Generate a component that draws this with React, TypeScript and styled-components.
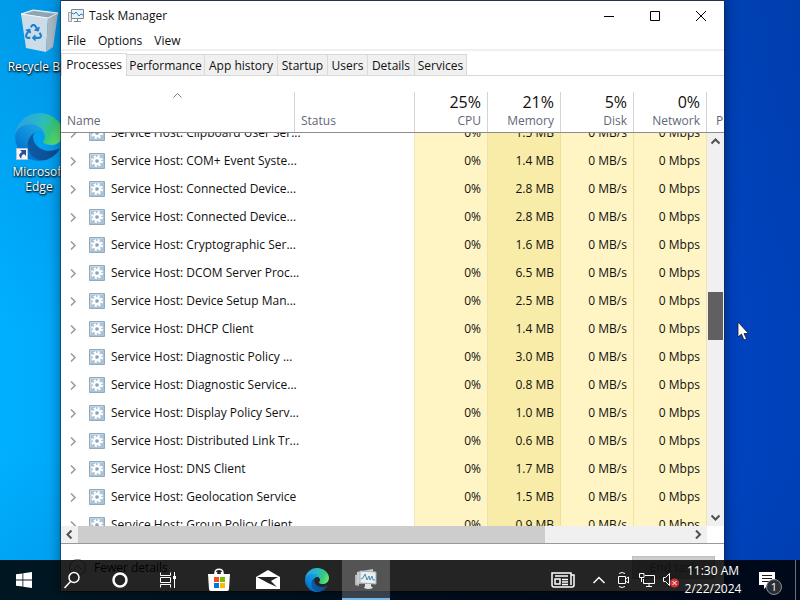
import React from 'react';
import styled, { createGlobalStyle } from 'styled-components';
import { FaRecycle } from 'react-icons/fa';

const GlobalStyle = createGlobalStyle`
  * { box-sizing: border-box; }
  html, body { margin: 0; height: 100%; overflow: hidden; }
  body, button, table { font-family: 'Open Sans', 'Noto Sans', sans-serif; font-size: 12px; line-height: 16px; }
  button { margin: 0; padding: 0; border: 0; background: none; color: inherit; }
  svg { display: block; flex: none; }
`;

const Desktop = styled.main`
  position: relative;
  height: 100vh;
  overflow: hidden;
  background: linear-gradient(180deg, rgba(0, 50, 120, 0.16), rgba(0, 0, 0, 0) 55%, rgba(0, 0, 0, 0) 75%, rgba(0, 40, 100, 0.1)),
    linear-gradient(90deg, #00b0ff 0, #00a8fa 8%, #0a6ad8 50%, #0044c0 90%, #0040b8 100%);
`;

const Shortcuts = styled.div`
  display: flex;
  flex-direction: column;
  gap: 39px;
  width: 78px;
  padding-top: 8px;
`;

const Shortcut = styled.button`
  position: relative;
  display: flex;
  flex-direction: column;
  align-items: center;
  gap: 3px;
  color: #fff;
  line-height: 15px;
  text-shadow: 0 1px 2px #000, 1px 1px 2px rgba(0, 0, 0, 0.8);
`;

const ShortcutBadge = styled.span`
  position: absolute;
  left: 16px;
  top: 35px;
`;

const Window = styled.section`
  position: absolute;
  left: 60px;
  right: 75px;
  top: 0;
  bottom: 8px;
  display: flex;
  flex-direction: column;
  background: #fff;
  background-clip: padding-box;
  border: 1px solid rgba(20, 40, 80, 0.55);
  border-top-color: #26304f;
  box-shadow: 0 0 12px rgba(0, 0, 0, 0.4);
  color: #101010;
`;

const TitleBar = styled.header`
  display: flex;
  align-items: center;
  height: 30px;
  padding-left: 7px;
`;

const Title = styled.h1`
  flex: 1;
  margin: 0 0 0 5px;
  font-size: 12px;
  font-weight: 400;
`;

const CaptionButton = styled.button`
  display: grid;
  place-items: center;
  width: 46px;
  height: 30px;
`;

const MenuBar = styled.nav`
  display: flex;
  height: 20px;
  border-bottom: 2px solid #f0f0f0;
`;

const MenuItem = styled.button`
  padding: 2px 6px 0;
`;

const TabStrip = styled.div`
  display: flex;
  align-items: flex-end;
  height: 25px;
  border-bottom: 1px solid #d9d9d9;
`;

const Tab = styled.button<{ $width: number; $active?: boolean }>`
  width: ${p => p.$width}px;
  height: ${p => (p.$active ? 23 : 21)}px;
  margin-bottom: ${p => (p.$active ? -1 : 0)}px;
  padding-top: ${p => (p.$active ? 0 : 2)}px;
  background: ${p => (p.$active ? '#fff' : '#f0f0f0')};
  border: 1px solid #d9d9d9;
  border-left-width: ${p => (p.$active ? 1 : 0)}px;
  border-bottom-width: 0;
  white-space: nowrap;
`;

const ListPane = styled.div`
  flex: 1;
  min-height: 0;
  display: grid;
  grid-template-columns: minmax(0, 1fr) 17px;
  grid-template-rows: 57px minmax(0, 1fr) 17px;
  border-bottom: 1px solid #999;
`;

const ProcessTable = styled.table`
  display: contents;
`;

const Head = styled.thead`
  display: block;
  grid-column: 1 / -1;
  padding-top: 16px;
  border-bottom: 1px solid #8c8c8c;
`;

const Body = styled.tbody`
  display: block;
  overflow: hidden;
  min-height: 0;
`;

const Row = styled.tr`
  display: grid;
  grid-template-columns: 234px 120px repeat(4, 73px) minmax(0, 1fr);

  ${Body} &:first-child { margin-top: -14px; }
`;

const HeadCell = styled.th<{ $numeric?: boolean; $last?: boolean }>`
  display: flex;
  flex-direction: column;
  justify-content: flex-end;
  height: 40px;
  overflow: hidden;
  padding: 0 ${p => (p.$last ? 0 : 6)}px 3px ${p => (p.$last ? 9 : 6)}px;
  border-right: ${p => (p.$last ? 0 : 1)}px solid #d4d4d8;
  text-align: ${p => (p.$numeric ? 'right' : 'left')};
  color: #5f6878;
  font-weight: 400;
`;

const Usage = styled.span`
  margin-bottom: 1px;
  font-size: 16px;
  line-height: 20px;
  color: #101010;
`;

const SortMark = styled.span`
  align-self: center;
  margin-bottom: 13px;
`;

const NameCell = styled.td`
  display: flex;
  align-items: center;
  height: 28px;
  padding: 0 0 0 8px;
  white-space: nowrap;
`;

const ExpandButton = styled.button`
  flex: none;
  width: 20px;
  height: 9px;
`;

const ProcessName = styled.span`
  flex: none;
  margin-left: 6px;
`;

const ValueCell = styled.td<{ $warm?: boolean }>`
  height: 28px;
  padding: 6px 6px;
  text-align: right;
  white-space: nowrap;
  background: ${p => (p.$warm ? '#f9eca8' : '#fff4c4')};
  border-right: 1px solid ${p => (p.$warm ? '#eddf9c' : '#efe2ac')};
`;

const StatusCell = styled.td`
  height: 28px;
  padding: 0;
  border-right: 1px solid #eee6c0;
`;

const VScroll = styled.div`
  display: flex;
  flex-direction: column;
  background: #f0f0f0;
`;

const HScroll = styled.div`
  display: flex;
  background: #f0f0f0;
`;

const ScrollButton = styled.button`
  display: grid;
  place-items: center;
  width: 17px;
  height: 17px;
`;

const Space = styled.div<{ $grow: number }>`
  flex: ${p => p.$grow} 1 0;
`;

const VThumb = styled.div`
  height: 48px;
  margin: 0 1px;
  background: #606060;
`;

const HThumb = styled.div`
  flex: 467 1 0;
  background: #cdcdcd;
`;

const Footer = styled.footer`
  display: flex;
  align-items: center;
  justify-content: space-between;
  height: 47px;
  padding: 0 9px 0 8px;
`;

const FewerDetails = styled.button`
  display: flex;
  align-items: center;
  gap: 8px;
`;

const EndTask = styled.button`
  width: 83px;
  height: 23px;
  background: #ccc;
  border: 1px solid #bfbfbf;
  color: #838383;
`;

const Taskbar = styled.nav`
  position: absolute;
  left: 0;
  right: 0;
  bottom: 0;
  display: flex;
  height: 40px;
  background: rgba(0, 0, 0, 0.86);
  color: #fff;
`;

const TaskButton = styled.button<{ $active?: boolean }>`
  display: grid;
  place-items: center;
  width: 48px;
  height: 40px;
  background: ${p => (p.$active ? 'rgba(255, 255, 255, 0.22)' : 'none')};
  border-bottom: ${p => (p.$active ? '2px solid #76b9ed' : '0')};
`;

const Apps = styled.div`
  display: flex;
  flex: 1;
  gap: 1px;
  padding-left: 3px;
`;

const TrayButton = styled.button`
  display: grid;
  place-items: center;
  width: 24px;
  height: 40px;
`;

const Clock = styled.button`
  width: 60px;
  line-height: 18px;
  white-space: nowrap;
`;

const Notifications = styled(TaskButton)`
  position: relative;
`;

const Count = styled.span`
  position: absolute;
  left: 23px;
  top: 19px;
  width: 16px;
  height: 16px;
  border: 1px solid #8a8f94;
  border-radius: 50%;
  background: #2a2f35;
  font-size: 11px;
  line-height: 14px;
`;

const ShowDesktop = styled.button`
  width: 5px;
  margin-left: 4px;
  border-left: 1px solid #6a6f74;
`;

const Pointer = styled.div`
  position: absolute;
  left: 737px;
  top: 321px;
`;

type Direction = 'up' | 'down' | 'left' | 'right';

const chevrons: Record<Direction, string> = {
  up: 'M.5 6.500 4.500 2.500 8.500 6.500',
  down: 'M.5 2.500 4.500 6.500 8.500 2.500',
  left: 'M6.500.5 2.500 4.500 6.500 8.500',
  right: 'M2 .5 6 4.500 2 8.500',
};

const Chevron = ({ to, color = '#505050', weight = 2 }: { to: Direction; color?: string; weight?: number }) => (
  <svg width="9" height="9" viewBox="0 0 9 9" fill="none" stroke={color} strokeWidth={weight}>
    <path d={chevrons[to]} />
  </svg>
);

const EdgeLogo = ({ size, id }: { size: number; id: string }) => (
  <svg width={size} height={size} viewBox="0 0 256 256">
    <defs>
      <linearGradient id={`${id}a`} x1="0.2" x2="1" y1="0.5" y2="0.5">
        <stop offset="0" stopColor="#0c59a4" />
        <stop offset="1" stopColor="#114a8b" />
      </linearGradient>
      <linearGradient id={`${id}b`} x1="0.7" x2="0.2" y1="0.2" y2="0.95">
        <stop offset="0" stopColor="#1b9de2" />
        <stop offset="0.6" stopColor="#0680d7" />
        <stop offset="1" stopColor="#0067c4" />
      </linearGradient>
      <linearGradient id={`${id}c`} x1="0" x2="1" y1="0.3" y2="0.6">
        <stop offset="0" stopColor="#2b9fe0" />
        <stop offset="0.45" stopColor="#2bb8c8" />
        <stop offset="0.75" stopColor="#36c780" />
        <stop offset="1" stopColor="#66eb6e" />
      </linearGradient>
    </defs>
    <g transform="translate(-4.630 -4.920)">
      <path fill={`url(#${id}a)`} d="M235.680,195.460a93.730,93.730,0,0,1-10.540,4.710,101.870,101.870,0,0,1-35.900,6.460c-47.320,0-88.540-32.550-88.540-74.320A31.480,31.480,0,0,1,117.130,105c-42.800,1.800-53.800,46.400-53.800,72.530,0,73.880,68.090,81.370,82.760,81.370,7.910,0,19.840-2.300,27-4.560l1.310-.440A128.340,128.340,0,0,0,241,201.100a4,4,0,0,0-5.320-5.640Z" />
      <path fill={`url(#${id}b)`} d="M110.340,246.340A79.200,79.200,0,0,1,87.600,225a80.720,80.720,0,0,1,29.530-120c3.120-1.470,8.450-4.130,15.540-4a32.350,32.350,0,0,1,25.690,13,31.880,31.880,0,0,1,6.360,18.660c0-.210,24.460-79.600-80-79.600-43.900,0-80,41.660-80,78.210a130.150,130.150,0,0,0,12.110,56,128,128,0,0,0,156.380,67.110,75.550,75.550,0,0,1-62.780-8Z" />
      <path fill={`url(#${id}c)`} d="M156.940,153.780c-.810,1.050-3.300,2.500-3.300,5.660,0,2.610,1.700,5.120,4.720,7.230,14.380,10,41.490,8.680,41.560,8.680a59.560,59.560,0,0,0,30.270-8.350A61.380,61.380,0,0,0,260.630,114c.260-22.410-8-37.310-11.340-43.910C228.090,28.760,182.350,5,132.610,5a128,128,0,0,0-128,126.200c.480-36.540,36.800-66.050,80-66.050,3.500,0,23.460.340,42,10.070,16.340,8.580,24.900,18.940,30.850,29.210,6.180,10.670,7.280,24.150,7.280,29.520S162,147.200,156.940,153.780Z" />
    </g>
  </svg>
);

const RecycleBin = () => (
  <svg width="48" height="48" viewBox="0 0 48 48">
    <path fill="#b9cbd8" d="M6 6 18 2l25 3-2 6-30 1z" />
    <path fill="#8fa5b4" d="m9 6 10-3 21 3-7 4z" />
    <path fill="#cddde8" d="m6 6 27 4-2 34-20-4z" />
    <path fill="#a9bac6" d="m33 10 10-5-5 34-7 5z" />
    <path fill="none" stroke="#f4f8fa" d="m6 6 27 4 10-5-25-3z" />
    <g transform="translate(10 16)">
      <FaRecycle size={17} color="#1b7fd4" />
    </g>
  </svg>
);

const ShortcutArrow = () => (
  <svg width="12" height="12" viewBox="0 0 12 12">
    <path fill="#f4f6fa" stroke="#b8c4d0" d="M.5.5h11v11H.5z" />
    <path fill="#24509a" d="M4 2h6v6L8 6c-2 1-3 2-2.500 4.500C2 8.500 3 5.500 6 4z" />
  </svg>
);

const TaskManagerIcon = () => (
  <svg width="16" height="14" viewBox="0 0 16 14" fill="none">
    <path fill="#e4e8ea" stroke="#9aa4aa" d="M.5 3.500h3v9h-3z" />
    <path fill="#e6f3fb" stroke="#7e8a92" d="M3.500.5h12v9h-12z" />
    <path stroke="#2e7fae" d="m4 4 2 1 2-2 3 4 2-2 2 1" />
    <path stroke="#7e8a92" d="M9.500 10v2M6 12.500h7" />
  </svg>
);

const ServiceIcon = () => (
  <svg width="16" height="16" viewBox="0 0 16 16">
    <path fill="#a9c2d5" stroke="#93aabb" d="M.5.5h15v15H.5z" />
    <path fill="none" stroke="#c4d7e5" d="M1.500 14V1.500H14" />
    <circle cx="8" cy="8" r="4.500" fill="none" stroke="#fff" strokeWidth="3" strokeDasharray="2 1.534" />
    <circle cx="8" cy="8" r="3" fill="#b5cbdb" stroke="#fff" strokeWidth="2" />
    <circle cx="8" cy="8" r="1.500" fill="#8ba6ba" />
  </svg>
);

const WindowsLogo = () => (
  <svg width="16" height="16" viewBox="0 0 16 16" fill="#fff">
    <path d="m0 2.300 6.500-.900v6.200H0zM7.300 1.300 16 0v7.600H7.300zM0 8.400h6.500v6.200L0 13.700zM7.300 8.400H16V16l-8.700-1.200z" />
  </svg>
);

const SearchIcon = () => (
  <svg width="18" height="18" viewBox="0 0 18 18" fill="none" stroke="#fff" strokeWidth="1.500">
    <circle cx="11" cy="6.500" r="5" />
    <path d="M7.500 10.500 1.500 17" />
  </svg>
);

const TaskViewIcon = () => (
  <svg width="18" height="16" viewBox="0 0 18 16" fill="none" stroke="#fff">
    <path d="M1.500.5v3h10v-3M1.500 5.500h10v5h-10zM1.500 15.500v-3h10v3M15.500 0v16" />
    <path fill="#fff" stroke="none" d="M14 4h3v3h-3z" />
  </svg>
);

const StoreIcon = () => (
  <svg width="24" height="24" viewBox="0 0 24 24">
    <path fill="none" stroke="#fff" strokeWidth="1.500" d="M8 7V5c0-5 8-5 8 0v2M9.500 7V4M14.500 7V4" />
    <path fill="#fff" d="M1 6h22l-1 15q0 2-2 2H4q-2 0-2-2z" />
    <path fill="#f25022" d="M7 9h5v5H7z" />
    <path fill="#7fba00" d="M13 9h5v5h-5z" />
    <path fill="#0078d4" d="M7 15h5v5H7z" />
    <path fill="#ffb900" d="M13 15h5v5h-5z" />
  </svg>
);

const MailIcon = () => (
  <svg width="24" height="20" viewBox="0 0 24 20">
    <path fill="#fff" d="M0 7 12 0l12 7v12H0z" />
    <path fill="#242424" d="M1 7h21l-7 4 6 6-9-4z" />
  </svg>
);

const MonitorsIcon = () => (
  <svg width="24" height="24" viewBox="0 0 24 24" fill="none">
    <path fill="#b5babd" d="m1 8 4-1v12l-4-1z" />
    <path fill="#c9cdd0" d="m3 5 16-3v13L3 17z" />
    <path fill="#e9eef1" stroke="#a7aeb3" d="m6 4 16 1v12L6 16z" />
    <path stroke="#4c8cab" d="m7 12 2-1 2-4 2 6 2-4 1 4 2-4 1 4h2" />
    <path fill="#dfe3e5" d="M11 17h6v2l2 2q-5 2-9 0l1-2z" />
  </svg>
);

const NewsIcon = () => (
  <svg width="24" height="16" viewBox="0 0 24 16" fill="none" stroke="#fff" strokeWidth="1.500">
    <path d="M20 3h3v10q0 2-2 2H3q-2 0-2-2V1h19v12" />
    <path d="M4 4h13M4 7h5v5H4zM11 7.500h6M11 10h6M11 12.500h6" />
  </svg>
);

const CameraIcon = () => (
  <svg width="12" height="16" viewBox="0 0 12 16" fill="none" stroke="#fff">
    <path d="M1.500 4.500h7v7h-7zM8.500 7l3-2v6l-3-2M2 1.500q3-2 6 0M2 14.500q3 2 6 0" />
  </svg>
);

const NetworkIcon = () => (
  <svg width="16" height="14" viewBox="0 0 16 14" fill="none" stroke="#fff">
    <path d="M6 2.500h9.500v8h-11V6M10 10.500v3M7 13.500h6M.5.5H5v4H.5zM2.500 4.500V9" />
  </svg>
);

const MutedIcon = () => (
  <svg width="18" height="16" viewBox="0 0 18 16" fill="none">
    <path stroke="#fff" d="M1.500 5.500h2l4-4v12l-4-4h-2z" />
    <circle cx="12.500" cy="11" r="4.500" fill="#d13438" />
    <path stroke="#fff" d="m10.500 9 4 4m0-4-4 4" />
  </svg>
);

const MessageIcon = () => (
  <svg width="16" height="17" viewBox="0 0 16 17">
    <path fill="#fff" d="M0 0h16v13h-7l-4 4v-4H0z" />
    <path stroke="#1c1c1c" d="M3 3.500h10M3 6.500h10M3 9.500h7" />
  </svg>
);

const tabs: [string, number][] = [
  ['Processes', 66],
  ['Performance', 78],
  ['App history', 73],
  ['Startup', 50],
  ['Users', 40],
  ['Details', 47],
  ['Services', 52],
];

const columns: [string, string][] = [
  ['25%', 'CPU'],
  ['21%', 'Memory'],
  ['5%', 'Disk'],
  ['0%', 'Network'],
];

const processes: [string, string][] = [
  ['Clipboard User Ser...', '1.5 MB'],
  ['COM+ Event Syste...', '1.4 MB'],
  ['Connected Device...', '2.8 MB'],
  ['Connected Device...', '2.8 MB'],
  ['Cryptographic Ser...', '1.6 MB'],
  ['DCOM Server Proc...', '6.5 MB'],
  ['Device Setup Man...', '2.5 MB'],
  ['DHCP Client', '1.4 MB'],
  ['Diagnostic Policy ...', '3.0 MB'],
  ['Diagnostic Service...', '0.8 MB'],
  ['Display Policy Serv...', '1.0 MB'],
  ['Distributed Link Tr...', '0.6 MB'],
  ['DNS Client', '1.7 MB'],
  ['Geolocation Service', '1.5 MB'],
  ['Group Policy Client', '0.9 MB'],
];

export default function App() {
  return (
    <Desktop>
      <GlobalStyle />
      <Shortcuts>
        <Shortcut>
          <RecycleBin />
          Recycle Bin
        </Shortcut>
        <Shortcut>
          <EdgeLogo size={48} id="desk" />
          <ShortcutBadge><ShortcutArrow /></ShortcutBadge>
          <span>Microsoft<br />Edge</span>
        </Shortcut>
      </Shortcuts>

      <Window aria-label="Task Manager">
        <TitleBar>
          <TaskManagerIcon />
          <Title>Task Manager</Title>
          <CaptionButton aria-label="Minimize">
            <svg width="10" height="10"><path stroke="#000" d="M0 5.500h10" /></svg>
          </CaptionButton>
          <CaptionButton aria-label="Maximize">
            <svg width="10" height="10"><path fill="none" stroke="#000" d="M.5.5h9v9h-9z" /></svg>
          </CaptionButton>
          <CaptionButton aria-label="Close">
            <svg width="10" height="10"><path stroke="#000" d="m0 0 10 10M10 0 0 10" /></svg>
          </CaptionButton>
        </TitleBar>
        <MenuBar>
          <MenuItem>File</MenuItem>
          <MenuItem>Options</MenuItem>
          <MenuItem>View</MenuItem>
        </MenuBar>
        <TabStrip role="tablist">
          {tabs.map(([label, width], i) => (
            <Tab key={label} role="tab" aria-selected={i === 0} $width={width} $active={i === 0}>{label}</Tab>
          ))}
        </TabStrip>

        <ListPane>
          <ProcessTable>
            <Head>
              <Row>
                <HeadCell>
                  <SortMark><Chevron to="up" color="#777" weight={1} /></SortMark>
                  Name
                </HeadCell>
                <HeadCell>Status</HeadCell>
                {columns.map(([usage, label]) => (
                  <HeadCell key={label} $numeric>
                    <Usage>{usage}</Usage>
                    {label}
                  </HeadCell>
                ))}
                <HeadCell $last>P</HeadCell>
              </Row>
            </Head>
            <Body>
              {processes.map(([name, memory], i) => (
                <Row key={i}>
                  <NameCell>
                    <ExpandButton aria-label={`Expand ${name}`}><Chevron to="right" color="#999" weight={1.5} /></ExpandButton>
                    <ServiceIcon />
                    <ProcessName>Service Host: {name}</ProcessName>
                  </NameCell>
                  <StatusCell />
                  <ValueCell>0%</ValueCell>
                  <ValueCell $warm>{memory}</ValueCell>
                  <ValueCell>0 MB/s</ValueCell>
                  <ValueCell>0 Mbps</ValueCell>
                </Row>
              ))}
            </Body>
          </ProcessTable>
          <VScroll>
            <ScrollButton aria-label="Scroll up"><Chevron to="up" /></ScrollButton>
            <Space $grow={142} />
            <VThumb />
            <Space $grow={169} />
            <ScrollButton aria-label="Scroll down"><Chevron to="down" /></ScrollButton>
          </VScroll>
          <HScroll>
            <ScrollButton aria-label="Scroll left"><Chevron to="left" /></ScrollButton>
            <HThumb />
            <Space $grow={145} />
            <ScrollButton aria-label="Scroll right"><Chevron to="right" /></ScrollButton>
          </HScroll>
        </ListPane>

        <Footer>
          <FewerDetails>
            <svg width="17" height="17" viewBox="0 0 17 17" fill="none" stroke="#777">
              <circle cx="8.500" cy="8.500" r="8" />
              <path d="m5 10 3.500-3.500L12 10" />
            </svg>
            Fewer details
          </FewerDetails>
          <EndTask disabled>End task</EndTask>
        </Footer>
      </Window>

      <Taskbar>
        <TaskButton aria-label="Start"><WindowsLogo /></TaskButton>
        <TaskButton aria-label="Search"><SearchIcon /></TaskButton>
        <TaskButton aria-label="Cortana">
          <svg width="16" height="16"><circle cx="8" cy="8" r="6.500" fill="none" stroke="#fff" strokeWidth="2.500" /></svg>
        </TaskButton>
        <TaskButton aria-label="Task View"><TaskViewIcon /></TaskButton>
        <Apps>
          <TaskButton aria-label="Store"><StoreIcon /></TaskButton>
          <TaskButton aria-label="Mail"><MailIcon /></TaskButton>
          <TaskButton aria-label="Edge"><EdgeLogo size={24} id="bar" /></TaskButton>
          <TaskButton aria-label="Task Manager" $active><MonitorsIcon /></TaskButton>
        </Apps>
        <TaskButton aria-label="News"><NewsIcon /></TaskButton>
        <TrayButton aria-label="Hidden icons">
          <svg width="12" height="8"><path fill="none" stroke="#fff" strokeWidth="1.500" d="m.5 7 5.500-5.500L11.500 7" /></svg>
        </TrayButton>
        <TrayButton aria-label="Camera"><CameraIcon /></TrayButton>
        <TrayButton aria-label="Network"><NetworkIcon /></TrayButton>
        <TrayButton aria-label="Volume"><MutedIcon /></TrayButton>
        <Clock>11:30 AM<br />2/22/2024</Clock>
        <Notifications aria-label="Notifications">
          <MessageIcon />
          <Count>1</Count>
        </Notifications>
        <ShowDesktop aria-label="Show desktop" />
      </Taskbar>

      <Pointer>
        <svg width="12" height="20" viewBox="0 0 12 20">
          <path fill="#fff" stroke="#111" strokeWidth="0.750" d="M1 1v15l3.500-3 2.500 6 2.500-1L7 12.500h4.500z" />
        </svg>
      </Pointer>
    </Desktop>
  );
}
